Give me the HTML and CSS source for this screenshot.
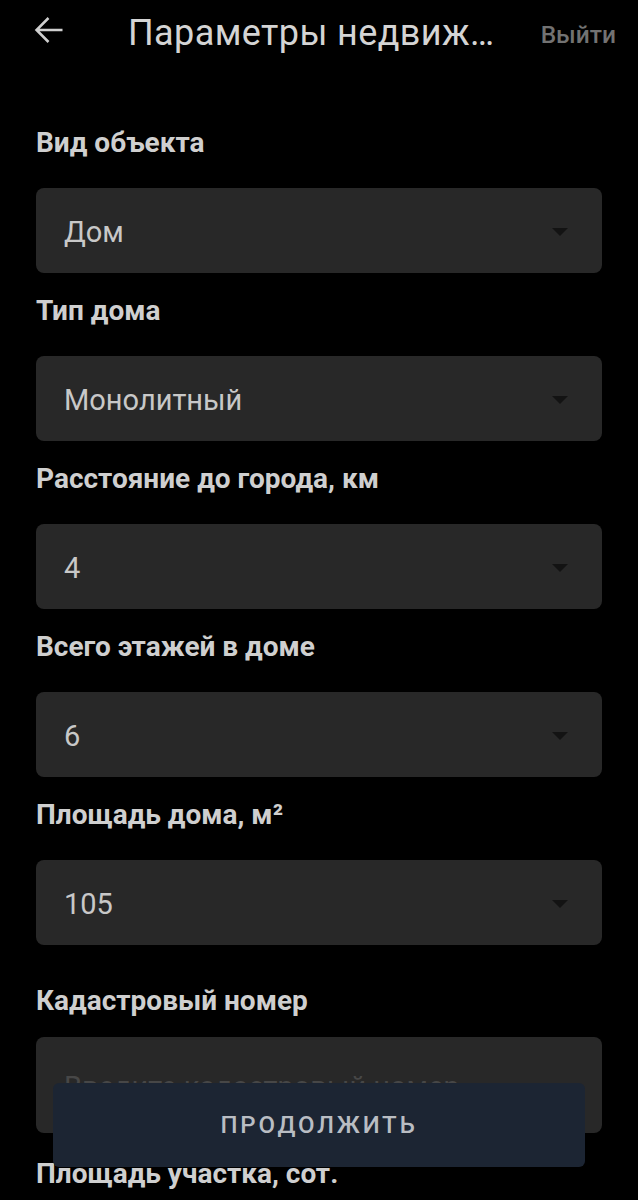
FILE: index.html
```html
<!DOCTYPE html>
<html lang="ru">
<head>
<meta charset="utf-8">
<title>Параметры недвижимости</title>
<link rel="stylesheet" href="styles.css">
</head>
<body>
<header class="header">
  <svg class="back" width="30" height="28" viewBox="0 0 30 28" aria-label="Назад">
    <path d="M28.5 14H2.5M14.5 2L2.5 14L14.5 26" fill="none" stroke="#cfcfcf" stroke-width="2.5" stroke-linecap="butt" stroke-linejoin="miter"/>
  </svg>
  <h1 class="title">Параметры недвиж…</h1>
  <span class="logout">Выйти</span>
</header>
<main class="form">
  <div class="group">
    <p class="label">Вид объекта</p>
    <div class="select"><span class="value">Дом</span><svg class="caret" width="16" height="8" viewBox="0 0 16 8"><path d="M0 0H16L8 8Z" fill="#131313"/></svg></div>
  </div>
  <div class="group">
    <p class="label">Тип дома</p>
    <div class="select"><span class="value">Монолитный</span><svg class="caret" width="16" height="8" viewBox="0 0 16 8"><path d="M0 0H16L8 8Z" fill="#131313"/></svg></div>
  </div>
  <div class="group">
    <p class="label">Расстояние до города, км</p>
    <div class="select"><span class="value">4</span><svg class="caret" width="16" height="8" viewBox="0 0 16 8"><path d="M0 0H16L8 8Z" fill="#131313"/></svg></div>
  </div>
  <div class="group">
    <p class="label">Всего этажей в доме</p>
    <div class="select"><span class="value">6</span><svg class="caret" width="16" height="8" viewBox="0 0 16 8"><path d="M0 0H16L8 8Z" fill="#131313"/></svg></div>
  </div>
  <div class="group group-last-select">
    <p class="label">Площадь дома, м²</p>
    <div class="select"><span class="value">105</span><svg class="caret" width="16" height="8" viewBox="0 0 16 8"><path d="M0 0H16L8 8Z" fill="#131313"/></svg></div>
  </div>
  <div class="group group-text">
    <p class="label">Кадастровый номер</p>
    <input class="text-input" type="text" placeholder="Введите кадастровый номер">
  </div>
  <div class="group group-text">
    <p class="label">Площадь участка, сот.</p>
    <input class="text-input" type="text" placeholder="Введите площадь участка">
  </div>
</main>
<button class="continue" type="button">ПРОДОЛЖИТЬ</button>
</body>
</html>
```
FILE: styles.css
```css
* { box-sizing: border-box; }
html, body { margin: 0; background: #000; }
body {
  font-family: Roboto, "Noto Sans", "Liberation Sans", sans-serif;
  color: #cfcfcf;
  padding-bottom: 140px;
}
.header {
  display: flex;
  align-items: center;
  height: 68px;
  padding: 0 22px 0 34px;
}
.back { flex: none; margin-bottom: 8px; }
.title {
  flex: 1;
  margin: 0 0 0 64px;
  font-size: 36px;
  font-weight: 400;
  color: #d4d4d4;
  white-space: nowrap;
  overflow: hidden;
  letter-spacing: 0.4px;
  line-height: 1.2;
}
.logout {
  font-size: 24.5px;
  font-weight: 500;
  color: #727272;
}
.form { padding: 59px 36px 0; }
.group { margin-bottom: 22px; }
.group-last-select { margin-bottom: 40px; }
.label {
  margin: 0;
  font-size: 28px;
  line-height: 32px;
  font-weight: 700;
  color: #cfcfcf;
}
.select {
  margin-top: 29px;
  height: 85px;
  background: #282828;
  border-radius: 8px;
  display: flex;
  align-items: center;
  justify-content: space-between;
  padding: 3px 34px 0 28px;
}
.value {
  font-size: 29px;
  color: #c8c8c8;
}
.caret { flex: none; }
.group-text { margin-bottom: 25px; }
.group-text .label { margin-bottom: 20px; }
.text-input {
  display: block;
  width: 100%;
  height: 96px;
  border: none;
  outline: none;
  border-radius: 8px;
  background: #282828;
  padding: 3px 28px 0;
  font-family: inherit;
  font-size: 29px;
  color: #c8c8c8;
}
.text-input::placeholder { color: #474747; }
.continue {
  position: fixed;
  left: 53px;
  right: 53px;
  bottom: 33px;
  height: 84px;
  border: none;
  border-radius: 6px;
  background: #1c2533;
  color: #b9bdc3;
  font-family: inherit;
  font-size: 24px;
  font-weight: 500;
  letter-spacing: 2.8px;
}
```
